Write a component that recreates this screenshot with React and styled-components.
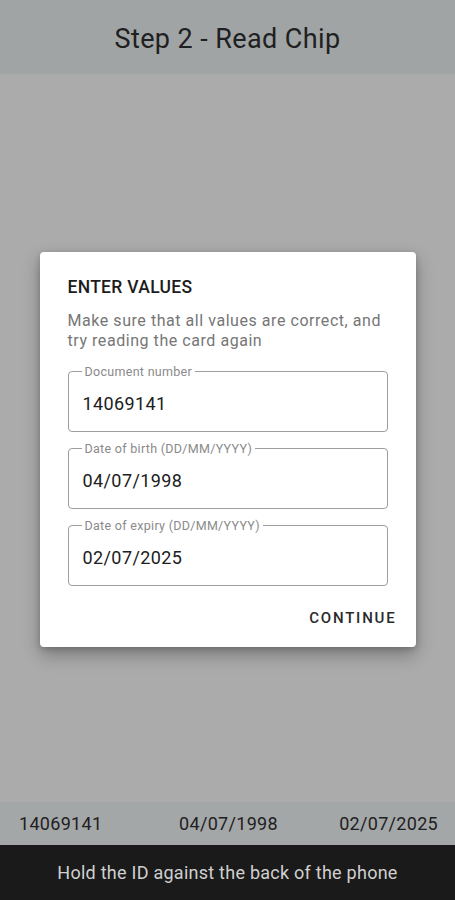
import React from "react";
import styled, { createGlobalStyle } from "styled-components";

const Global = createGlobalStyle`
  html, body { margin: 0; padding: 0; height: 100%; }
  body { font-family: Roboto, "Noto Sans", sans-serif; background: #ababab; }
  #root { height: 100%; }
`;

const Screen = styled.div`
  width: 455px;
  height: 900px;
  display: flex;
  flex-direction: column;
  background: #ababab;
`;

const TopBar = styled.header`
  height: 74px;
  background: #a1a4a5;
  display: flex;
  align-items: center;
  justify-content: center;
  font-size: 27px;
  letter-spacing: 0.4px;
  color: #1e2021;
  padding-top: 4px;
  box-sizing: border-box;
`;

const Middle = styled.main`
  flex: 1;
  display: flex;
  flex-direction: column;
  align-items: center;
  padding-top: 178px;
  box-sizing: border-box;
`;

const Dialog = styled.section`
  width: 376px;
  height: 395px;
  background: #ffffff;
  border-radius: 4px;
  box-shadow: 0 8px 18px rgba(0, 0, 0, 0.28), 0 2px 6px rgba(0, 0, 0, 0.18);
  box-sizing: border-box;
  padding: 24px 19px 0 28px;
  display: flex;
  flex-direction: column;
`;

const Title = styled.h2`
  margin: 0;
  font-size: 17.5px;
  font-weight: 500;
  letter-spacing: 0.3px;
  color: #1c1c1c;
  line-height: 22px;
`;

const Subtitle = styled.p`
  margin: 13px 0 0;
  font-size: 16px;
  line-height: 19.5px;
  color: #767676;
  letter-spacing: 0.55px;
`;

const Fields = styled.div`
  display: flex;
  flex-direction: column;
  gap: 10px;
  margin-top: 15px;
  margin-right: 9px;
`;

const Field = styled.fieldset`
  margin: 0;
  min-width: 0;
  height: 67px;
  box-sizing: border-box;
  border: 1px solid #9e9e9e;
  border-radius: 4px;
  padding: 0 14px;
  display: block;
`;

const Legend = styled.legend`
  font-size: 12.5px;
  color: #8a8a8a;
  padding: 0 3px;
  margin-left: -1px;
  line-height: 13px;
  letter-spacing: 0.3px;
`;

const Value = styled.div`
  font-size: 18px;
  line-height: 24px;
  color: #202020;
  letter-spacing: 0.4px;
  margin-top: 14px;
`;

const Actions = styled.div`
  display: flex;
  justify-content: flex-end;
  margin-top: 23px;
`;

const TextButton = styled.button`
  background: none;
  border: none;
  padding: 0;
  font-family: Roboto, sans-serif;
  font-size: 15px;
  font-weight: 500;
  letter-spacing: 1.8px;
  color: #2a2a2a;
`;

const DataRow = styled.div`
  height: 43px;
  background: #a4a7a8;
  display: grid;
  grid-template-columns: 1fr auto 1fr;
  align-items: center;
  padding: 0 17px 0 19px;
  font-size: 18px;
  letter-spacing: 0.3px;
  color: #1e2021;
`;

const DataCell = styled.span`
  justify-self: ${(p) => p.$align};
`;

const BottomBar = styled.footer`
  height: 55px;
  background: #1a1a1a;
  color: #d0d0d0;
  display: flex;
  align-items: center;
  justify-content: center;
  font-size: 18px;
  letter-spacing: 0.25px;
`;

const fields = [
  { label: "Document number", value: "14069141" },
  { label: "Date of birth (DD/MM/YYYY)", value: "04/07/1998" },
  { label: "Date of expiry (DD/MM/YYYY)", value: "02/07/2025" },
];

export default function App() {
  return (
    <>
      <Global />
      <Screen>
        <TopBar>Step 2 - Read Chip</TopBar>
        <Middle>
          <Dialog>
            <Title>ENTER VALUES</Title>
            <Subtitle>Make sure that all values are correct, and try reading the card again</Subtitle>
            <Fields>
              {fields.map((f) => (
                <Field key={f.label}>
                  <Legend>{f.label}</Legend>
                  <Value>{f.value}</Value>
                </Field>
              ))}
            </Fields>
            <Actions>
              <TextButton>CONTINUE</TextButton>
            </Actions>
          </Dialog>
        </Middle>
        <DataRow>
          <DataCell $align="start">14069141</DataCell>
          <DataCell $align="center">04/07/1998</DataCell>
          <DataCell $align="end">02/07/2025</DataCell>
        </DataRow>
        <BottomBar>Hold the ID against the back of the phone</BottomBar>
      </Screen>
    </>
  );
}
